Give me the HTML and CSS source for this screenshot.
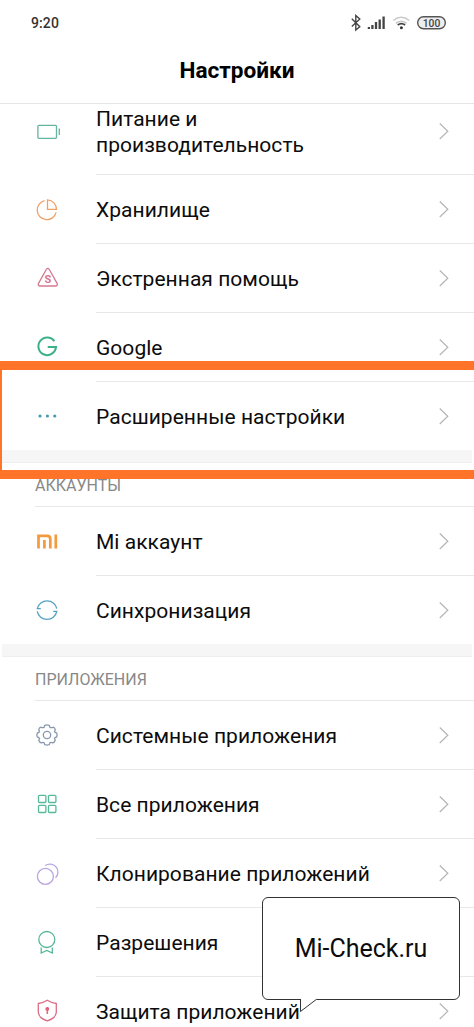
FILE: index.html
```html
<!DOCTYPE html>
<html lang="ru">
<head>
<meta charset="utf-8">
<title>Настройки</title>
<link rel="stylesheet" href="styles.css">
</head>
<body>
<div class="screen">
  <header class="header">
    <div class="status">
      <span class="time">9:20</span>
      <svg class="status-icons" width="98" height="20" viewBox="350 13 98 20" fill="none">
        <path d="M351.800 18.700l8 8-4 3.300V15.500l4 3.600-8 7.400" stroke="#444" stroke-width="1.400"/>
        <path d="M368.900 29v-2M372.400 29v-4M376 29v-7M379.700 29v-9.500M383.600 29V16.500" stroke="#444" stroke-width="2.300"/>
        <path d="M393.200 20.500q8-6.500 16 0M395.800 23.300q5.400-4.200 10.800 0" stroke="#c9c9c9" stroke-width="1.600"/>
        <path d="M397.700 25q3.700-2.700 7.400 0" stroke="#444" stroke-width="1.700"/>
        <circle cx="401.400" cy="27.800" r="1.500" fill="#333"/>
        <rect x="417.700" y="16.700" width="27.600" height="12" rx="5.800" fill="#eee" stroke="#555" stroke-width="1.400"/>
        <text class="battery" x="431.500" y="26.600" text-anchor="middle" textLength="17.500" lengthAdjust="spacingAndGlyphs">100</text>
      </svg>
    </div>
    <h1 class="title">Настройки</h1>
  </header>

  <main>
    <div class="row tall">
      <svg class="icon" viewBox="0 0 24 24" stroke="#62b5a0"><rect x="2.900" y="6.300" width="18.600" height="13" rx="1"/><path d="M24.300 9.600v6.500"/></svg>
      <div class="label"><span>Питание и<br>производительность</span><svg class="chevron" viewBox="0 0 10 18"><path d="M.8 1.500L8.800 9.200.8 17"/></svg></div>
    </div>
    <div class="row">
      <svg class="icon" viewBox="0 0 24 24" stroke="#efa069"><path d="M9.600 3.700a9.600 9.600 0 1 0 11.500 11.700M12.500 2.900v9.500h9a9.500 9.500 0 0 0-9-9.500z"/></svg>
      <div class="label"><span>Хранилище</span><svg class="chevron" viewBox="0 0 10 18"><path d="M.8 1.500L8.800 9.200.8 17"/></svg></div>
    </div>
    <div class="row">
      <svg class="icon" viewBox="0 0 24 24" stroke="#d77990"><path d="M11.400 3.300q1.400-1.700 2.800 0l8 14.300q.7 2-1.400 2.400H4.800q-2.100-.4-1.400-2.400z"/><text class="sos" x="12.800" y="17.300" text-anchor="middle">S</text></svg>
      <div class="label"><span>Экстренная помощь</span><svg class="chevron" viewBox="0 0 10 18"><path d="M.8 1.500L8.800 9.200.8 17"/></svg></div>
    </div>
    <div class="row">
      <svg class="icon thick" viewBox="0 0 24 24" stroke="#3cb08b"><path d="M19.400 6.200a8.800 8.800 0 1 0 1.600 5.700H12.700"/></svg>
      <div class="label"><span>Google</span><svg class="chevron" viewBox="0 0 10 18"><path d="M.8 1.500L8.800 9.200.8 17"/></svg></div>
    </div>
    <div class="row last">
      <svg class="icon dots" viewBox="0 0 24 24"><circle cx="5" cy="12" r="1.600"/><circle cx="12.400" cy="12" r="1.600"/><circle cx="19.800" cy="12" r="1.600"/></svg>
      <div class="label"><span>Расширенные настройки</span><svg class="chevron" viewBox="0 0 10 18"><path d="M.8 1.500L8.800 9.200.8 17"/></svg></div>
    </div>

    <div class="band"></div>
    <h2 class="section">АККАУНТЫ</h2>
    <div class="row">
      <svg class="icon logo" viewBox="0 0 24 24" stroke="#f29a3d"><path d="M3.500 19.600V6.800h8.600q3.200 0 3.200 3v9.800M9.400 11v8.600M20.800 5.500v14.100"/></svg>
      <div class="label"><span>Mi аккаунт</span><svg class="chevron" viewBox="0 0 10 18"><path d="M.8 1.500L8.800 9.200.8 17"/></svg></div>
    </div>
    <div class="row last">
      <svg class="icon" viewBox="0 0 24 24" stroke="#52a2c3"><path d="M5.800 10.700H2.300a10 10 0 0 1 19.500 0M18.200 13.400h3.600a10 10 0 0 1-19.600 0"/></svg>
      <div class="label"><span>Синхронизация</span><svg class="chevron" viewBox="0 0 10 18"><path d="M.8 1.500L8.800 9.200.8 17"/></svg></div>
    </div>

    <div class="band"></div>
    <h2 class="section">ПРИЛОЖЕНИЯ</h2>
    <div class="row">
      <svg class="icon" viewBox="0 0 24 24" stroke="#8798ae"><path d="M9.600 2.600Q12 1.100 14.400 2.600L14.900 4.300Q16.500 5 18 4.200Q20 4.600 20.200 6.800L19.500 8.700Q20 9.700 21.700 10Q22.500 12 21.700 14Q19.800 14.300 19.500 15.500L20.200 17.300Q19.500 19.500 17.700 19.900Q16 19 14.900 19.800L14.400 21.500Q12 22.600 9.600 21.500L9.100 19.800Q8 19 6.300 19.900Q4.500 19.500 3.800 17.300L4.500 15.500Q4.200 14.300 2.300 14Q1.500 12 2.300 10Q4 9.700 4.500 8.700L3.800 6.800Q4 4.600 6 4.200Q7.500 5 9.100 4.300z"/><circle cx="12" cy="12" r="3.700"/></svg>
      <div class="label"><span>Системные приложения</span><svg class="chevron" viewBox="0 0 10 18"><path d="M.8 1.500L8.800 9.200.8 17"/></svg></div>
    </div>
    <div class="row">
      <svg class="icon" viewBox="0 0 24 24" stroke="#55b99a"><rect x="3.500" y="3.300" width="7.400" height="7.200" rx="1"/><rect x="13.500" y="3.300" width="7.400" height="7.200" rx="1"/><rect x="3.500" y="13.300" width="7.400" height="7.200" rx="1"/><rect x="13.500" y="13.300" width="7.400" height="7.200" rx="1"/></svg>
      <div class="label"><span>Все приложения</span><svg class="chevron" viewBox="0 0 10 18"><path d="M.8 1.500L8.800 9.200.8 17"/></svg></div>
    </div>
    <div class="row">
      <svg class="icon" viewBox="0 0 24 24" stroke="#b9a4df"><circle cx="10.400" cy="15.400" r="8"/><path d="M10.200 4.600A8 8 0 0 1 20.500 16.800"/></svg>
      <div class="label"><span>Клонирование приложений</span><svg class="chevron" viewBox="0 0 10 18"><path d="M.8 1.500L8.800 9.200.8 17"/></svg></div>
    </div>
    <div class="row">
      <svg class="icon" viewBox="0 0 24 24" stroke="#58b79a"><circle cx="11.800" cy="9.500" r="8"/><path d="M6.200 17.500v5.500l5.600-2.600 5.500 2.600v-5.500"/></svg>
      <div class="label"><span>Разрешения</span><svg class="chevron" viewBox="0 0 10 18"><path d="M.8 1.500L8.800 9.200.8 17"/></svg></div>
    </div>
    <div class="row last">
      <svg class="icon" viewBox="0 0 24 24" stroke="#dc6d83"><path d="M12.300 1.300q4 2.600 9 3.200v9q-.5 5.600-9 8.400-8.500-2.800-9-8.400v-9q5-.6 9-3.200z"/><circle cx="12.300" cy="9.900" r="1.900" fill="#dc5d75" stroke="none"/><path d="M12.300 10v5" stroke-width="1.600"/></svg>
      <div class="label"><span>Защита приложений</span><svg class="chevron" viewBox="0 0 10 18"><path d="M.8 1.500L8.800 9.200.8 17"/></svg></div>
    </div>
  </main>

  <div class="highlight"></div>
  <div class="callout">
    <span>Mi-Check.ru</span>
    <svg class="tail" width="20" height="15" viewBox="0 0 20 15"><path d="M2.500 0h16v1.500L2.800 13.500z" fill="#fff"/><path d="M2.500 1v12.500L18.500 1.300" fill="none" stroke="#333"/></svg>
  </div>
</div>
</body>
</html>
```
FILE: styles.css
```css
* { box-sizing: border-box; }
body { margin: 0; background: #fff; color: #0c0c0c; font-family: Roboto, "Noto Sans", sans-serif; }
.screen { position: relative; width: 474px; height: 1027px; overflow: hidden; }
.header { height: 104px; border-bottom: 1px solid #e6e6e6; }
.status { display: flex; justify-content: space-between; align-items: center; height: 46px; padding: 0 26px 0 31px; }
.time { font-size: 14px; font-weight: 500; color: #333; letter-spacing: 0.1px; }
.status-icons { display: block; }
.battery { font-size: 11.5px; font-weight: 500; fill: #444; }
.title { margin: 9px 0 0; font-size: 22.6px; line-height: 32px; font-weight: 700; text-align: center; color: #000; }
.row { display: flex; height: 69px; padding-left: 35px; }
.row.tall { height: 71px; }
.icon { flex: none; width: 24px; height: 24px; margin: 22px 37px 0 0; overflow: visible; fill: none; stroke-width: 1.3; }
.icon.dots { fill: #4697b4; }
.icon.thick { stroke-width: 2; }
.icon.logo { stroke-width: 2.7; }
.tall .icon { margin-top: 15px; }
.sos { font-size: 11px; font-weight: 700; fill: #d77990; stroke: none; }
.label { flex: 1; display: flex; align-items: center; justify-content: space-between; padding: 2px 25px 0 0; border-bottom: 1px solid #e8e8e8; font-size: 21px; line-height: 25px; letter-spacing: 0.04px; }
.tall .label { align-items: flex-start; padding-top: 3px; line-height: 25.5px; }
.last .label { border-bottom-color: transparent; }
.chevron { width: 10px; height: 18px; margin-top: -3px; fill: none; stroke: #b5b5b5; stroke-width: 1.2; }
.tall .chevron { margin-top: 15px; }
.band { height: 13px; margin: 0 2px; margin-top: -1px; background: #f6f6f6; border-bottom: 1px solid #eee; }
.section { height: 44px; margin: 0 0 0 35px; padding-top: 12px; border-bottom: 1px solid #e8e8e8; font-size: 16px; line-height: 22px; font-weight: 400; color: #888; }
.highlight { position: absolute; left: 0; top: 361px; width: 474px; height: 118px; border: solid #ff7429; border-width: 9px 0 9px 2px; }
.callout { position: absolute; left: 262px; top: 897px; width: 198px; height: 103px; display: flex; align-items: center; justify-content: center; border: 1px solid #333; border-radius: 6px; background: #fff; font-size: 25px; }
.tail { position: absolute; left: 35px; top: 100px; }
```
